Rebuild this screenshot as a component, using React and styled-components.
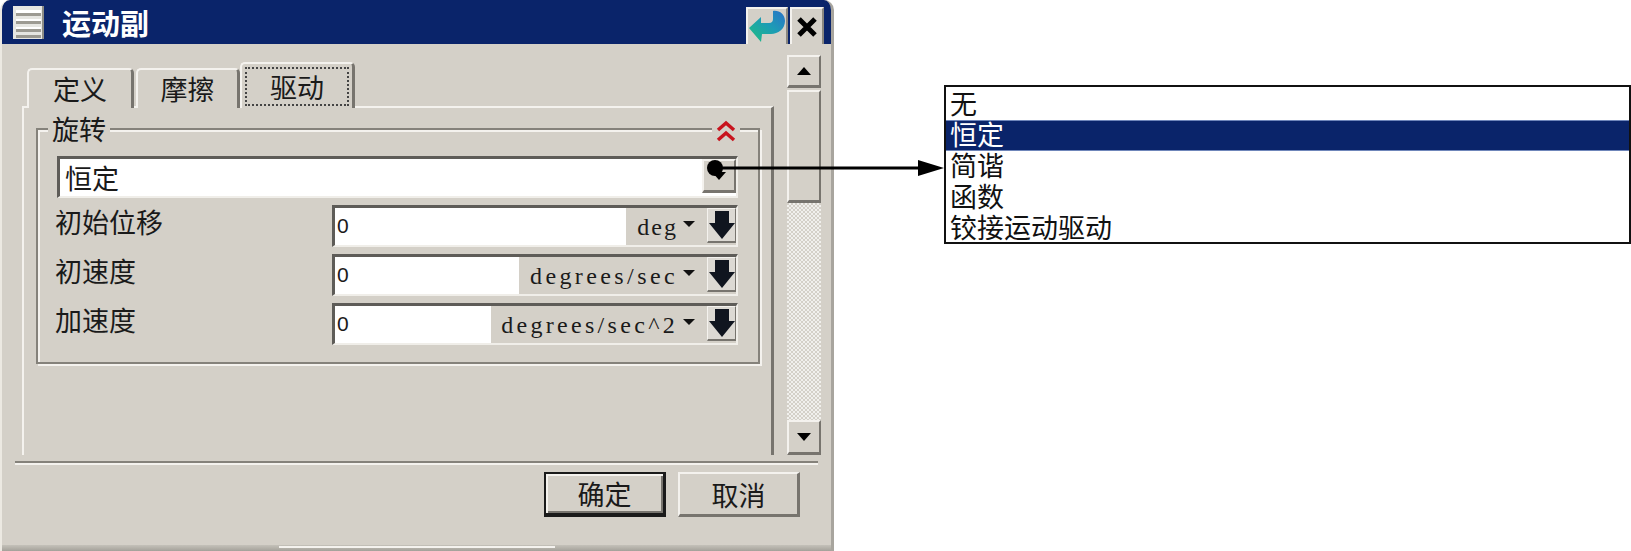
import React from "react";
import styled, { createGlobalStyle } from "styled-components";

const GlobalStyle = createGlobalStyle`
  html, body { margin: 0; padding: 0; background: #fff; }
  body { width: 1631px; height: 551px; overflow: hidden; }
  * { box-sizing: border-box; }
`;

const CJK = `"Noto Sans CJK SC", "Noto Sans", sans-serif`;

const Page = styled.div`
  position: relative;
  display: flex;
  align-items: flex-start;
  width: 1631px;
  height: 551px;
  font-family: ${CJK};
  color: #1a1a1a;
`;

const Dialog = styled.div`
  display: flex;
  flex-direction: column;
  width: 834px;
  height: 551px;
  background: #d4d0c8;
  border-left: 2px solid #ece9e2;
  border-right: 3px solid #a8a59e;
  border-radius: 10px 10px 0 0;
  overflow: hidden;
`;

const TitleBar = styled.div`
  display: flex;
  align-items: center;
  flex: none;
  height: 44px;
  margin: 0 -3px 0 -2px;
  padding: 0 10px 0 13px;
  background: #0a246a;
`;

const Title = styled.div`
  margin-left: 18px;
  font-size: 29px;
  font-weight: 700;
  line-height: 44px;
  color: #fff;
`;

const TitleButtons = styled.div`
  display: flex;
  gap: 2px;
  margin-left: auto;
  padding-top: 7px;
  align-self: stretch;
`;

const TitleButton = styled.div`
  display: flex;
  align-items: center;
  justify-content: center;
  width: ${(p) => p.$w}px;
  height: 37px;
  background: #d4d0c8;
  border-top: 2px solid #f4f2ee;
  border-left: 2px solid #f4f2ee;
  border-right: 2px solid #8a8780;
`;

const Content = styled.div`
  display: flex;
  flex: none;
  height: 411px;
  padding: 11px 0 0 20px;
`;

const Sheet = styled.div`
  display: flex;
  flex-direction: column;
  width: 752px;
`;

const TabRow = styled.div`
  display: flex;
  align-items: flex-end;
  flex: none;
  height: 53px;
  padding-left: 5px;
  position: relative;
  z-index: 1;
  margin-bottom: -2px;
`;

const Tab = styled.div`
  display: flex;
  align-items: center;
  justify-content: center;
  width: ${(p) => p.$w}px;
  height: ${(p) => (p.$active ? 46 : 40)}px;
  margin-left: ${(p) => p.$gap || 0}px;
  padding-bottom: ${(p) => (p.$active ? 0 : 2)}px;
  font-size: 27px;
  line-height: 1;
  background: #d4d0c8;
  border-top: 2px solid #f4f2ee;
  border-left: 2px solid #f4f2ee;
  border-right: 3px solid #77746e;
  border-radius: 5px 5px 0 0;
`;

const TabFocus = styled.div`
  display: flex;
  align-items: center;
  justify-content: center;
  width: 104px;
  height: 39px;
  border: 2px dotted #444;
`;

const Panel = styled.div`
  flex: 1;
  padding: 20px 12px 0 12px;
  border-top: 2px solid #f4f2ee;
  border-left: 2px solid #f4f2ee;
  border-right: 3px solid #77746e;
`;

const Group = styled.div`
  position: relative;
  display: flex;
  flex-direction: column;
  gap: 7px;
  width: 724px;
  height: 236px;
  padding: 26px 20px 0 19px;
  border: 2px solid #85827b;
  box-shadow: inset 2px 2px 0 #f4f2ee, 2px 2px 0 #f4f2ee;
`;

const Legend = styled.div`
  position: absolute;
  left: 10px;
  top: -17px;
  padding: 0 4px;
  font-size: 27px;
  line-height: 32px;
  background: #d4d0c8;
`;

const Collapse = styled.div`
  position: absolute;
  right: 18px;
  top: -10px;
  display: flex;
  padding: 0 4px;
  background: #d4d0c8;
`;

const Combo = styled.div`
  display: flex;
  height: 42px;
  background: #fff;
  border-top: 3px solid #5e5c58;
  border-left: 3px solid #5e5c58;
  border-right: 2px solid #f0eee9;
  border-bottom: 2px solid #f0eee9;
`;

const ComboText = styled.div`
  flex: 1;
  padding-left: 5px;
  font-size: 27px;
  line-height: 38px;
`;

const ComboButton = styled.div`
  display: flex;
  align-items: center;
  justify-content: center;
  width: 34px;
  height: 34px;
  margin: 0 0 0 auto;
  background: #d4d0c8;
  border-top: 2px solid #f4f2ee;
  border-left: 2px solid #f4f2ee;
  border-right: 2px solid #77746e;
  border-bottom: 3px solid #77746e;
`;

const Row = styled.div`
  display: flex;
  align-items: center;
  height: 42px;
`;

const Label = styled.div`
  width: 277px;
  margin-left: -2px;
  font-size: 27px;
  line-height: 36px;
  padding-bottom: 8px;
`;

const Field = styled.div`
  display: flex;
  flex: 1;
  height: 42px;
  border-top: 3px solid #5e5c58;
  border-left: 3px solid #5e5c58;
  border-right: 2px solid #f0eee9;
  border-bottom: 2px solid #f0eee9;
`;

const FieldValue = styled.div`
  flex: 1;
  padding-left: 2px;
  font-family: "Liberation Sans", sans-serif;
  font-size: 21px;
  line-height: 35px;
  background: #fff;
`;

const Unit = styled.div`
  display: flex;
  align-items: center;
  justify-content: flex-end;
  flex: none;
  width: ${(p) => p.$w}px;
  font-family: "Liberation Serif", serif;
  font-size: 24px;
  letter-spacing: ${(p) => p.$spacing}px;
  line-height: 1;
  white-space: nowrap;
`;

const UnitCaret = styled.span`
  width: 0;
  height: 0;
  margin: 0 12px 6px 5px;
  border-left: 6px solid transparent;
  border-right: 6px solid transparent;
  border-top: 6px solid #111;
`;

const SpinButton = styled.div`
  display: flex;
  align-items: center;
  justify-content: center;
  flex: none;
  width: 29px;
  height: 35px;
  background: #dcd9d3;
  border-top: 1px solid #f4f2ee;
  border-left: 1px solid #f4f2ee;
  border-bottom: 2px solid #77746e;
  border-right: 1px solid #77746e;
`;

const ScrollBar = styled.div`
  display: flex;
  flex-direction: column;
  width: 34px;
  height: 400px;
  margin-left: 13px;
`;

const ScrollButton = styled.div`
  display: flex;
  align-items: center;
  justify-content: center;
  flex: none;
  height: ${(p) => p.$h}px;
  margin-bottom: ${(p) => p.$mb || 0}px;
  background: #d4d0c8;
  border-top: 2px solid #f4f2ee;
  border-left: 2px solid #f4f2ee;
  border-right: 2px solid #77746e;
  border-bottom: 3px solid #77746e;
`;

const ScrollTrack = styled.div`
  flex: 1;
  background: repeating-conic-gradient(#f1f0ed 0 25%, #d4d0c8 0 50%) 0 0 / 4px 4px;
`;

const Separator = styled.div`
  flex: none;
  height: 4px;
  margin: 6px 13px 0 13px;
  border-top: 2px solid #85827b;
  border-bottom: 2px solid #f4f2ee;
`;

const Actions = styled.div`
  display: flex;
  justify-content: flex-end;
  gap: 12px;
  flex: none;
  height: 80px;
  padding: 7px 31px 0 0;
`;

const ActionButton = styled.div`
  display: flex;
  align-items: center;
  justify-content: center;
  width: 122px;
  height: 45px;
  font-size: 27px;
  line-height: 1;
  background: #d4d0c8;
  border-top: 2px solid ${(p) => (p.$primary ? "#1a1a1a" : "#f4f2ee")};
  border-left: 2px solid ${(p) => (p.$primary ? "#1a1a1a" : "#f4f2ee")};
  border-right: ${(p) => (p.$primary ? "3px solid #1a1a1a" : "3px solid #77746e")};
  border-bottom: ${(p) => (p.$primary ? "4px solid #1a1a1a" : "3px solid #77746e")};
  box-shadow: ${(p) => (p.$primary ? "inset 2px 2px 0 #f4f2ee, inset -2px -2px 0 #77746e" : "none")};
`;

const Footer = styled.div`
  flex: 1;
  margin: 0 -3px 0 -2px;
  background: linear-gradient(#c4c1b9, #a4a19a);
  padding-left: 279px;
`;

const FooterHandle = styled.div`
  width: 276px;
  height: 2px;
  margin-top: 1px;
  background: #f4f2ee;
`;

const Dropdown = styled.ul`
  display: flex;
  flex-direction: column;
  width: 687px;
  height: 159px;
  margin: 85px 0 0 110px;
  padding: 2px 0 0;
  list-style: none;
  background: #fff;
  border: 2px solid #111;
  overflow: hidden;
`;

const DropdownItem = styled.li`
  flex: none;
  height: 31px;
  padding-left: 4px;
  font-size: 27px;
  line-height: 27px;
  white-space: nowrap;
  color: ${(p) => (p.$selected ? "#fff" : "#111")};
  background: ${(p) => (p.$selected ? "#0a246a" : "transparent")};
  box-shadow: ${(p) => (p.$selected ? "inset 0 1px 0 #6f86ba, inset 0 -1px 0 #6f86ba" : "none")};
`;

const Pointer = styled.svg`
  position: absolute;
  left: 700px;
  top: 150px;
  pointer-events: none;
`;

const ArrowDown = () => (
  <svg width="26" height="30" viewBox="0 0 26 30">
    <path d="M6 1h14v12h6L13 29 0 13h6z" fill="#10151f" />
  </svg>
);

const TriUp = () => (
  <svg width="16" height="10" viewBox="0 0 16 10">
    <path d="M8 1l7 8H1z" fill="#000" />
  </svg>
);

const TriDown = ({ size = 16 }) => (
  <svg width={size} height={(size * 10) / 16} viewBox="0 0 16 10">
    <path d="M1 1h14l-7 8z" fill="#000" />
  </svg>
);

const ListIcon = () => (
  <svg width="31" height="33" viewBox="0 0 31 33">
    <rect x="0" y="0" width="31" height="33" fill="#e6e6e2" />
    <rect x="29" y="0" width="2" height="33" fill="#8d8d86" />
    <rect x="3" y="4" width="25" height="3" fill="#fff" />
    <rect x="3" y="7" width="25" height="3" fill="#9c9a92" />
    <rect x="3" y="13" width="25" height="2" fill="#fff" />
    <rect x="3" y="15" width="25" height="3" fill="#9c9a92" />
    <rect x="3" y="21" width="25" height="2" fill="#fff" />
    <rect x="3" y="23" width="25" height="3" fill="#9c9a92" />
    <rect x="3" y="29" width="25" height="3" fill="#9c9a92" />
  </svg>
);

const ReturnIcon = () => (
  <svg width="38" height="33" viewBox="0 0 38 33">
    <defs>
      <linearGradient id="ret" x1="0" y1="1" x2="1" y2="0">
        <stop offset="0" stopColor="#1fbf7f" />
        <stop offset="0.55" stopColor="#1d9cb5" />
        <stop offset="1" stopColor="#2a72c8" />
      </linearGradient>
    </defs>
    <path
      d="M1 18L13 7v6h8c3 0 4-2 4-4V1c6-1 12 3 12 10 0 8-7 13-14 13h-9l-1 8z"
      fill="url(#ret)"
    />
  </svg>
);

const CloseIcon = () => (
  <svg width="22" height="22" viewBox="0 0 22 22">
    <path d="M3 3l16 16M19 3L3 19" stroke="#000" strokeWidth="5" />
  </svg>
);

const ChevronsUp = () => (
  <svg width="20" height="23" viewBox="0 0 20 23">
    <path
      d="M2 10l8-7 8 7M2 20l8-7 8 7"
      fill="none"
      stroke="#c8141e"
      strokeWidth="3.5"
    />
  </svg>
);

const rows = [
  { label: "初始位移", unit: "deg", width: 81, spacing: 2 },
  { label: "初速度", unit: "degrees/sec", width: 188, spacing: 3.4 },
  { label: "加速度", unit: "degrees/sec^2", width: 216, spacing: 3.3 },
];

const options = ["无", "恒定", "简谐", "函数", "铰接运动驱动"];

export default function App() {
  return (
    <Page>
      <GlobalStyle />
      <Dialog>
        <TitleBar>
          <ListIcon />
          <Title>运动副</Title>
          <TitleButtons>
            <TitleButton $w={42}>
              <ReturnIcon />
            </TitleButton>
            <TitleButton $w={34}>
              <CloseIcon />
            </TitleButton>
          </TitleButtons>
        </TitleBar>

        <Content>
          <Sheet>
            <TabRow>
              <Tab $w={107}>定义</Tab>
              <Tab $w={104} $gap={2}>摩擦</Tab>
              <Tab $w={115} $active>
                <TabFocus>驱动</TabFocus>
              </Tab>
            </TabRow>
            <Panel>
              <Group>
                <Legend>旋转</Legend>
                <Collapse>
                  <ChevronsUp />
                </Collapse>
                <Combo>
                  <ComboText>恒定</ComboText>
                  <ComboButton>
                    <TriDown />
                  </ComboButton>
                </Combo>
                {rows.map((r) => (
                  <Row key={r.label}>
                    <Label>{r.label}</Label>
                    <Field>
                      <FieldValue>0</FieldValue>
                      <Unit $w={r.width} $spacing={r.spacing}>
                        {r.unit}
                        <UnitCaret />
                      </Unit>
                      <SpinButton>
                        <ArrowDown />
                      </SpinButton>
                    </Field>
                  </Row>
                ))}
              </Group>
            </Panel>
          </Sheet>
          <ScrollBar>
            <ScrollButton $h={33} $mb={2}>
              <TriUp />
            </ScrollButton>
            <ScrollButton $h={113} />
            <ScrollTrack />
            <ScrollButton $h={35}>
              <TriDown />
            </ScrollButton>
          </ScrollBar>
        </Content>

        <Separator />
        <Actions>
          <ActionButton $primary>确定</ActionButton>
          <ActionButton>取消</ActionButton>
        </Actions>
        <Footer>
          <FooterHandle />
        </Footer>
      </Dialog>

      <Dropdown>
        {options.map((o) => (
          <DropdownItem key={o} $selected={o === "恒定"}>
            {o}
          </DropdownItem>
        ))}
      </Dropdown>

      <Pointer width="246" height="36" viewBox="0 0 246 36">
        <circle cx="15" cy="18" r="8" fill="#000" />
        <path d="M15 18H222" stroke="#000" strokeWidth="3" />
        <path d="M218 10l26 8-26 8z" fill="#000" />
      </Pointer>
    </Page>
  );
}
